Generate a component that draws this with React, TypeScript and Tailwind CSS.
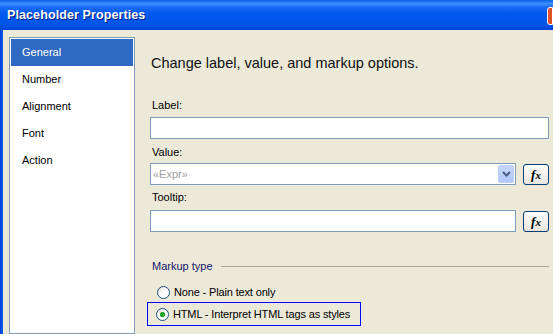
import { useState } from "react";

const font = { fontFamily: '"Liberation Sans", Arial, sans-serif' };

const items = ["General", "Number", "Alignment", "Font", "Action"];

const FxButton = () => (
  <button
    type="button"
    className="w-[26px] h-[21px] shrink-0 flex items-center justify-center rounded-[3px] border border-[#003c74] bg-gradient-to-b from-white to-[#e6e4dc]"
  >
    <span
      className="text-[13px] leading-none font-bold italic text-black"
      style={{ fontFamily: '"Liberation Serif", "Times New Roman", serif' }}
    >
      f<span className="text-[11px]">x</span>
    </span>
  </button>
);

const Radio = ({ checked }: { checked: boolean }) => (
  <span className="w-[13px] h-[13px] shrink-0 rounded-full border border-[#1c5180] bg-gradient-to-br from-[#dcdcd6] via-white to-white flex items-center justify-center">
    {checked && (
      <span className="w-[5px] h-[5px] rounded-full bg-[#21a121] shadow-[0_0_1px_#55d155]" />
    )}
  </span>
);

export default function App() {
  const [selected, setSelected] = useState(0);
  const [markup, setMarkup] = useState("html");

  return (
    <div
      className="w-[553px] h-[334px] overflow-hidden flex flex-col bg-[#ece9d8] text-[11px] text-black"
      style={font}
    >
      {/* title bar */}
      <div className="h-[30px] shrink-0 flex items-center justify-between pl-[7px] bg-[linear-gradient(to_bottom,#0a5fe8_0%,#3d91fb_12%,#1a6af5_25%,#0058ee_45%,#0055e6_80%,#0046d8_100%)]">
        <span className="text-white text-[12.5px] font-bold tracking-[0.1px] [text-shadow:1px_1px_0_#0a1e80]">
          Placeholder Properties
        </span>
        <span className="w-[6px] h-[18px] mt-[2px] rounded-l-[3px] border border-white bg-[#e0502a]" />
      </div>

      <div className="flex flex-1 min-h-0">
        {/* left window frame */}
        <div className="w-[3px] shrink-0 bg-gradient-to-r from-[#0040d0] to-[#0a5df0]" />

        {/* category list */}
        <div className="pl-[6px] pt-[7px] shrink-0 flex">
          <div className="w-[126px] h-full border border-[#7f9db9] bg-white p-px">
            {items.map((item, i) => (
              <div
                key={item}
                onClick={() => setSelected(i)}
                className={
                  "h-[27px] flex items-center pl-[11px] " +
                  (selected === i ? "bg-[#316ac5] text-white" : "text-black")
                }
              >
                {item}
              </div>
            ))}
          </div>
        </div>

        {/* content */}
        <div className="flex-1 flex flex-col pl-[15px] pr-[4px]">
          <div className="mt-[24px] pl-px text-[14.5px] leading-[18px] text-[#111]">
            Change label, value, and markup options.
          </div>

          <div className="mt-[27px] pl-[2px] leading-[13px]">Label:</div>
          <input
            className="mt-[5px] h-[22px] w-full border border-[#7f9db9] bg-white px-[3px] outline-none"
            style={font}
          />

          <div className="mt-[7px] pl-[2px] leading-[13px]">Value:</div>
          <div className="mt-[4px] flex items-center gap-[7px]">
            <div className="flex-1 h-[22px] border border-[#7f9db9] bg-white flex items-center justify-between pl-[2px] pr-px">
              <span className="text-[#a0a0a0]">«Expr»</span>
              <span className="w-[16px] h-[18px] rounded-[2px] border border-[#b9cdf8] bg-gradient-to-b from-[#c6d6fc] to-[#b2c8f8] flex items-center justify-center">
                <svg width="9" height="6" viewBox="0 0 9 6">
                  <path
                    d="M1 1 L4.5 4.5 L8 1"
                    fill="none"
                    stroke="#4d6185"
                    strokeWidth="2"
                  />
                </svg>
              </span>
            </div>
            <FxButton />
          </div>

          <div className="mt-[6px] pl-[2px] leading-[13px]">Tooltip:</div>
          <div className="mt-[6px] flex items-center gap-[7px]">
            <input
              className="flex-1 h-[22px] border border-[#7f9db9] bg-white px-[3px] outline-none"
              style={font}
            />
            <FxButton />
          </div>

          <div className="mt-[28px] flex items-center gap-[8px] pl-[2px]">
            <span className="leading-[13px] text-[#15156a]">Markup type</span>
            <span className="flex-1 h-px bg-[#aca899]" />
          </div>

          <div className="mt-[9px] -ml-[3px] flex flex-col items-start tracking-[-0.15px]">
            <label
              className="h-[20px] flex items-center gap-[4px] pl-[9px] pr-[10px] border border-transparent whitespace-nowrap"
              onClick={() => setMarkup("none")}
            >
              <Radio checked={markup === "none"} />
              <span>None - Plain text only</span>
            </label>
            <label
              className={
                "h-[24px] flex items-center gap-[4px] pl-[8px] pr-[10px] whitespace-nowrap border " +
                (markup === "html" ? "border-[#0000ff]" : "border-transparent")
              }
              onClick={() => setMarkup("html")}
            >
              <Radio checked={markup === "html"} />
              <span>HTML - Interpret HTML tags as styles</span>
            </label>
          </div>
        </div>
      </div>
    </div>
  );
}
